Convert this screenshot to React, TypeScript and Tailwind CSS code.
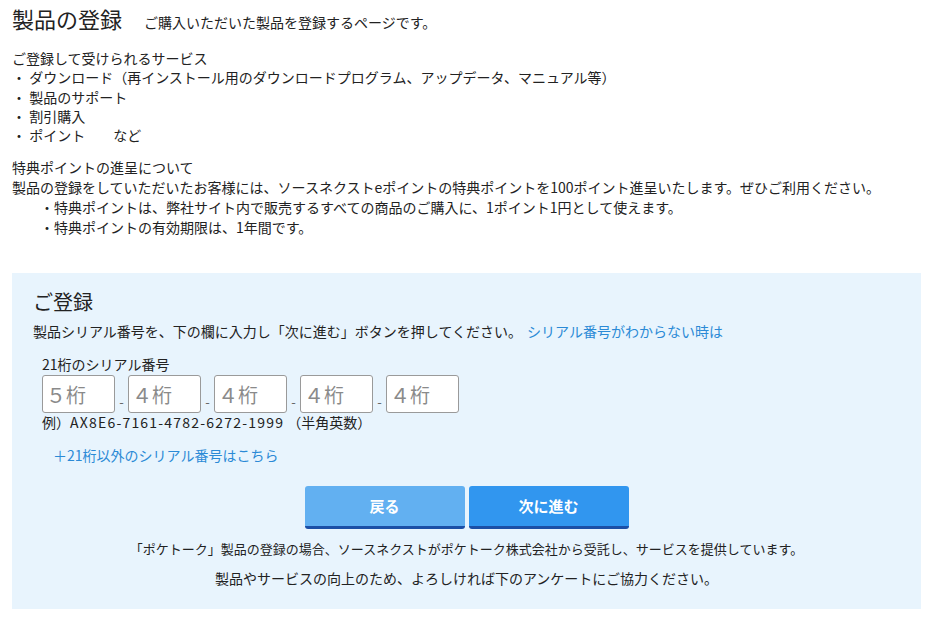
import React from "react";

const font = { fontFamily: '"Noto Sans CJK JP", "Noto Sans", sans-serif' };

function SerialInput({ ph }: { ph: string }) {
  return (
    <input
      type="text"
      placeholder={ph}
      className="w-[73px] h-[38px] border border-[#9a9a9a] rounded-[3px] bg-white px-[3px] text-[20px] placeholder:text-[#8a8a8a] text-[#333] outline-none"
    />
  );
}

function Dash() {
  return <span className="w-[13px] text-center text-[13px] leading-[13px] text-[#666] mt-[14px]">-</span>;
}

export default function App() {
  return (
    <div className="w-[927px] h-[621px] bg-white text-[#222] overflow-hidden" style={font}>
      <div className="px-[12px] pt-[2px]">
        <div className="flex items-baseline h-[32px]">
          <h1 className="text-[22px] leading-[32px] font-normal">製品の登録</h1>
          <span className="ml-[22px] text-[14px]">ご購入いただいた製品を登録するページです。</span>
        </div>
        <div className="mt-[15px] text-[14px] leading-[19.3px]">
          <p>ご登録して受けられるサービス</p>
          <p>・ ダウンロード（再インストール用のダウンロードプログラム、アップデータ、マニュアル等）</p>
          <p>・ 製品のサポート</p>
          <p>・ 割引購入</p>
          <p>・ ポイント　　など</p>
        </div>
        <div className="mt-[13px] text-[14px] leading-[19.7px]">
          <p>特典ポイントの進呈について</p>
          <p>製品の登録をしていただいたお客様には、ソースネクストeポイントの特典ポイントを100ポイント進呈いたします。ぜひご利用ください。</p>
          <p className="pl-[28px]">・特典ポイントは、弊社サイト内で販売するすべての商品のご購入に、1ポイント1円として使えます。</p>
          <p className="pl-[28px]">・特典ポイントの有効期限は、1年間です。</p>
        </div>
      </div>

      <div className="mx-[12px] w-[909px] mt-[36px] h-[336px] bg-[#e8f4fd] pt-[15px] px-[21px]">
        <h2 className="text-[20px] leading-[28px] font-normal">ご登録</h2>
        <p className="mt-[5px] text-[14px] leading-[20px]">
          製品シリアル番号を、下の欄に入力し「次に進む」ボタンを押してください。
          <span className="ml-[5px] text-[#2b8ad6]">シリアル番号がわからない時は</span>
        </p>
        <div className="pl-[9px] mt-[14px]">
          <p className="text-[14px] leading-[18px]">21桁のシリアル番号</p>
          <div className="flex items-center mt-[2px]">
            <SerialInput ph="５桁" />
            <Dash />
            <SerialInput ph="４桁" />
            <Dash />
            <SerialInput ph="４桁" />
            <Dash />
            <SerialInput ph="４桁" />
            <Dash />
            <SerialInput ph="４桁" />
          </div>
          <p className="text-[14px] leading-[18px]">
            例）<span className="tracking-[1.2px]">AX8E6-7161-4782-6272-1999</span> （半角英数）
          </p>
          <p className="mt-[15px] pl-[11px] text-[14px] leading-[18px] text-[#2b8ad6]">＋21桁以外のシリアル番号はこちら</p>
        </div>
        <div className="flex justify-center gap-[4px] mt-[22px]">
          <button className="w-[160px] h-[43px] rounded-[3px] bg-[#62b0f1] border-b-[3px] border-[#1b4fa6] text-white font-bold text-[15px]">戻る</button>
          <button className="w-[160px] h-[43px] rounded-[3px] bg-[#3196ef] border-b-[3px] border-[#1b4fa6] text-white font-bold text-[15px]">次に進む</button>
        </div>
        <p className="text-center text-[13px] leading-[18px] mt-[11px]">「ポケトーク」製品の登録の場合、ソースネクストがポケトーク株式会社から受託し、サービスを提供しています。</p>
        <p className="text-center text-[14px] leading-[18px] mt-[11px]">製品やサービスの向上のため、よろしければ下のアンケートにご協力ください。</p>
      </div>
    </div>
  );
}
